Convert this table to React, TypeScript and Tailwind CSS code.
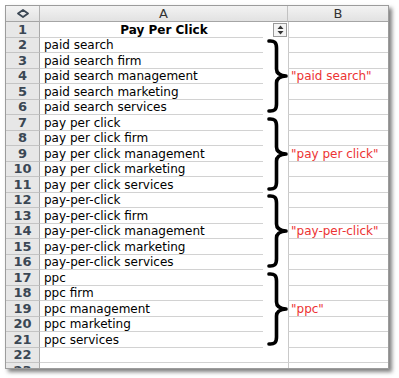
import React from "react";

const rows: string[] = [
  "paid search",
  "paid search firm",
  "paid search management",
  "paid search marketing",
  "paid search services",
  "pay per click",
  "pay per click firm",
  "pay per click management",
  "pay per click marketing",
  "pay per click services",
  "pay-per-click",
  "pay-per-click firm",
  "pay-per-click management",
  "pay-per-click marketing",
  "pay-per-click services",
  "ppc",
  "ppc firm",
  "ppc management",
  "ppc marketing",
  "ppc services",
];

// row number -> red label in column B
const labels: Record<number, string> = {
  4: '"paid search"',
  9: '"pay per click"',
  14: '"pay-per-click"',
  19: '"ppc"',
};

const font = { fontFamily: '"DejaVu Sans", Verdana, sans-serif' };

function RowLabel({ n }: { n: number }) {
  return (
    <div className="h-[15.5px] bg-[#e7e7e7] border-b border-r border-b-[#c4c4c4] border-r-[#a9a9a9] flex items-center justify-center text-[13px] font-bold leading-none text-[#3b4754]">
      {n}
    </div>
  );
}

function Brace() {
  return (
    <div className="h-[77.5px] flex items-center">
      <svg width="26" height="76" viewBox="0 0 26 76" fill="none">
        <path
          d="M5 3 C10.5 2.5 12.5 4.5 12.5 10 L12.5 31 C12.5 35.5 15.5 37.5 22 38 C15.5 38.5 12.5 40.5 12.5 45 L12.5 66 C12.5 71.5 10.5 73.5 5 73"
          stroke="#000"
          strokeWidth="3.6"
          strokeLinecap="round"
          strokeLinejoin="round"
        />
      </svg>
    </div>
  );
}

export default function App() {
  return (
    <div className="w-[399px] h-[378px] bg-white pt-[5px] pl-[5px]" style={font}>
      <div className="relative w-[384px] h-[364px] overflow-hidden border border-[#9c9c9c] bg-white shadow-[3px_3px_4px_rgba(0,0,0,0.5)]">
        <div className="grid grid-cols-[34px_248px_100px]">
          {/* header */}
          <div className="h-4 bg-gradient-to-b from-[#f3f3f3] to-[#e2e2e2] border-b border-r border-b-[#a5a5a5] border-r-[#b2b2b2] flex items-center justify-center">
            <svg width="12" height="9" viewBox="0 0 12 9">
              <path d="M6 1 L11 4.5 L6 8 L1 4.5 Z" fill="none" stroke="#3b4754" strokeWidth="1.8" strokeLinejoin="round" />
            </svg>
          </div>
          <div className="h-4 bg-gradient-to-b from-[#f3f3f3] to-[#e2e2e2] border-b border-r border-b-[#a5a5a5] border-r-[#c2c2c2] flex items-center justify-center text-[13px] leading-none text-[#333]">
            A
          </div>
          <div className="h-4 bg-gradient-to-b from-[#f3f3f3] to-[#e2e2e2] border-b border-b-[#a5a5a5] flex items-center justify-center text-[13px] leading-none text-[#333]">
            B
          </div>

          {/* row 1 */}
          <RowLabel n={1} />
          <div className="relative h-[15.5px] flex items-center">
            <div className="absolute left-0 bottom-0 w-[223px] border-b border-[#d2d2d2]" />
            <span className="w-full text-center text-[12px] font-bold leading-none text-black">Pay Per Click</span>
            <div className="absolute right-[1px] top-[1px] w-[14px] h-[14px] border border-[#9a9a9a] bg-[#f4f4f4] flex items-center justify-center">
              <svg width="7" height="10" viewBox="0 0 7 10">
                <path d="M3.5 0.5 L6.5 4 L0.5 4 Z M3.5 9.5 L6.5 6 L0.5 6 Z" fill="#333" />
              </svg>
            </div>
          </div>
          <div className="h-[15.5px] border-l border-b border-l-[#c9c9c9] border-b-[#d2d2d2]" />

          {rows.map((text, i) => {
            const n = i + 2;
            return (
              <React.Fragment key={n}>
                <RowLabel n={n} />
                <div className="h-[15.5px] flex items-center">
                  <div className="w-[223px] h-full border-b border-[#d2d2d2] flex items-center pl-1 pt-[1px] text-[12px] leading-none text-black">
                    {text}
                  </div>
                </div>
                <div className="h-[15.5px] border-l border-b border-l-[#c9c9c9] border-b-[#d2d2d2] flex items-center pl-[2px] pt-[1px] text-[12px] leading-none text-[#ec3333]">
                  {labels[n] ?? ""}
                </div>
              </React.Fragment>
            );
          })}

          {[22, 23].map((n) => (
            <React.Fragment key={n}>
              <RowLabel n={n} />
              <div className="h-[15.5px] border-b border-[#d2d2d2]" />
              <div className="h-[15.5px] border-l border-b border-l-[#c9c9c9] border-b-[#d2d2d2]" />
            </React.Fragment>
          ))}
        </div>

        {/* brace annotations over the grid */}
        <div className="absolute left-[258px] top-[31.5px] flex flex-col">
          <Brace />
          <Brace />
          <Brace />
          <Brace />
        </div>
      </div>
    </div>
  );
}
